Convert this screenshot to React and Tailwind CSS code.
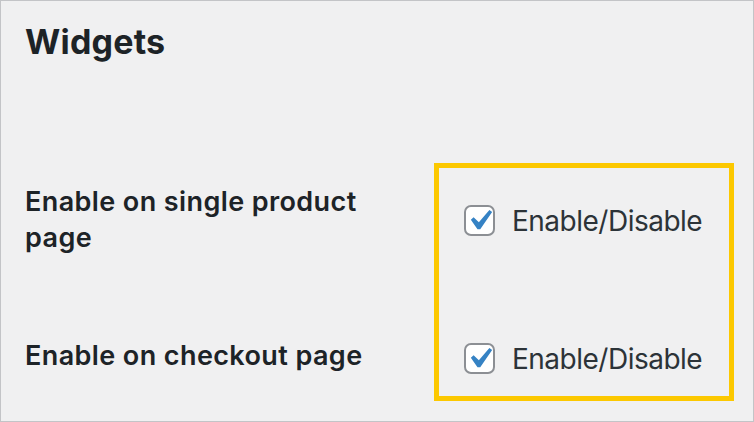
function CheckboxRow({ label }) {
  return (
    <label className="flex items-center gap-[17px]">
      <span className="relative block w-[31px] h-[31px] rounded-[7px] border-2 border-[#8c8f94] bg-white">
        <svg
          viewBox="0 0 20 20"
          className="absolute -left-[7px] -top-[7px] w-[41px] h-[41px]"
        >
          <path
            d="M14.83 4.89l1.34.94-5.81 8.38H9.02L5.78 9.67l1.34-1.25 2.57 2.4z"
            fill="#3582c4"
          />
        </svg>
      </span>
      <span className="text-[28px] leading-[31px] tracking-[-0.5px] text-[#2c3338] pt-[3px]">{label}</span>
    </label>
  )
}

export default function App() {
  return (
    <div
      className="w-[754px] h-[422px] bg-[#f0f0f1] border border-[#c3c4c7] pl-6 pt-[21px] overflow-hidden"
      style={{ fontFamily: 'Inter, "Noto Sans", sans-serif' }}
    >
      <h2 className="text-[34px] leading-[40px] font-bold tracking-[0.2px] text-[#1d2327]">Widgets</h2>

      <div className="flex mt-[101px]">
        <div className="w-[409px] text-[27px] leading-[36px] font-semibold tracking-[0.4px] text-[#1d2327]">
          <div className="mt-[21px] w-[370px]">Enable on single product page</div>
          <div className="mt-[82px]">Enable on checkout page</div>
        </div>

        <div className="w-[300px] h-[238px] border-[5px] border-[#fcc800] pl-[25px] pt-[35px]">
          <CheckboxRow label="Enable/Disable" />
          <div className="mt-[104px]">
            <CheckboxRow label="Enable/Disable" />
          </div>
        </div>
      </div>
    </div>
  )
}
